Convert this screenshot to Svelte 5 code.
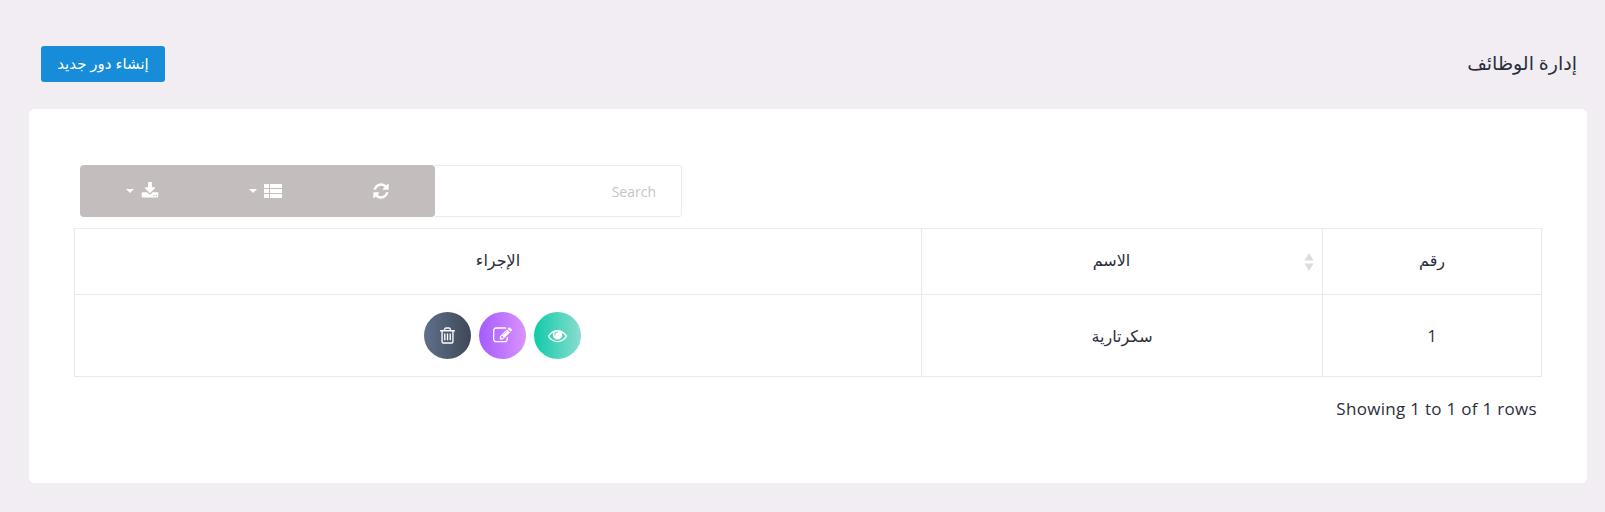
<script>
  const paths = {
    refresh: "M1639 1056q0 5-1 7-64 268-268 434.5t-478 166.5q-146 0-282.5-55t-243.5-157l-129 129q-19 19-45 19t-45-19-19-45v-448q0-26 19-45t45-19h448q26 0 45 19t19 45-19 45l-137 137q71 66 161 102t187 36q134 0 250-65t186-179q11-17 53-117 8-23 30-23h192q13 0 22.5 9.5t9.5 22.5zm25-800v448q0 26-19 45t-45 19h-448q-26 0-45-19t-19-45 19-45l138-138q-148-137-349-137-134 0-250 65t-186 179q-11 17-53 117-8 23-30 23h-199q-13 0-22.5-9.5t-9.5-22.5v-7q65-268 270-434.5t480-166.5q146 0 284 55.5t245 156.5l130-129q19-19 45-19t45 19 19 45z",
    list: "M0 2h5v4H0zM6 2h12v4H6zM0 7h5v4H0zM6 7h12v4H6zM0 12h5v4H0zM6 12h12v4H6z",
    download: "M1344 1344q0-26-19-45t-45-19-45 19-19 45 19 45 45 19 45-19 19-45zm256 0q0-26-19-45t-45-19-45 19-19 45 19 45 45 19 45-19 19-45zm128-224v320q0 40-28 68t-68 28h-1472q-40 0-68-28t-28-68v-320q0-40 28-68t68-28h465l135 136q58 56 136 56t136-56l136-136h464q40 0 68 28t28 68zm-325-569q17 41-14 70l-448 448q-18 19-45 19t-45-19l-448-448q-31-29-14-70 17-39 59-39h256v-448q0-26 19-45t45-19h256q26 0 45 19t19 45v448h256q42 0 59 39z",
    trash: "M704 736v576q0 14-9 23t-23 9h-64q-14 0-23-9t-9-23v-576q0-14 9-23t23-9h64q14 0 23 9t9 23zm256 0v576q0 14-9 23t-23 9h-64q-14 0-23-9t-9-23v-576q0-14 9-23t23-9h64q14 0 23 9t9 23zm256 0v576q0 14-9 23t-23 9h-64q-14 0-23-9t-9-23v-576q0-14 9-23t23-9h64q14 0 23 9t9 23zm128 724v-948h-896v948q0 22 7 40.5t14.5 27 10.5 8.5h832q3 0 10.5-8.5t14.5-27 7-40.5zm-672-1076h448l-48-117q-7-9-17-11h-317q-10 2-17 11zm928 32v64q0 14-9 23t-23 9h-96v948q0 83-47 143.5t-113 60.5h-832q-66 0-113-58.5t-47-141.5v-952h-96q-14 0-23-9t-9-23v-64q0-14 9-23t23-9h309l70-167q15-37 54-63t79-26h320q40 0 79 26t54 63l70 167h309q14 0 23 9t9 23z",
    edit: "M888 1184l116-116-152-152-116 116v56h96v96h56zm440-720q-16-16-33 1l-350 350q-17 17-1 33t33-1l350-350q17-17 1-33zm80 594v190q0 119-84.5 203.5t-203.5 84.5h-832q-119 0-203.5-84.5t-84.5-203.5v-832q0-119 84.5-203.5t203.5-84.5h832q63 0 117 25 15 7 18 23 3 17-9 29l-49 49q-14 14-32 8-23-6-45-6h-832q-66 0-113 47t-47 113v832q0 66 47 113t113 47h832q66 0 113-47t47-113v-126q0-13 9-22l64-64q15-15 35-7t20 29zm-96-738l288 288-672 672h-288v-288zm444 132l-92 92-288-288 92-92q28-28 68-28t68 28l152 152q28 28 28 68t-28 68z",
    eye: "M1664 960q-152-236-381-353 61 104 61 225 0 185-131.5 316.5t-316.5 131.5-316.5-131.5-131.5-316.5q0-121 61-225-229 117-381 353 133 205 333.5 326.5t434.5 121.5 434.5-121.5 333.5-326.5zm-720-384q0-20-14-34t-34-14q-125 0-214.5 89.5t-89.5 214.5q0 20 14 34t34 14 34-14 14-34q0-86 61-147t147-61q20 0 34-14t14-34zm848 384q0 34-20 69-140 230-376.5 368.5t-499.5 138.5-499.5-139-376.5-368q-20-35-20-69t20-69q140-229 376.5-368t499.5-139 499.5 139 376.5 368q20 35 20 69z"
  };
</script>

<div class="page" dir="rtl">
  <header class="head">
    <h1>إدارة الوظائف</h1>
    <button class="create">إنشاء دور جديد</button>
  </header>

  <section class="card">
    <div class="tools" dir="ltr">
      <div class="group">
        <button class="tool dl">
          <span class="caret"></span>
          <svg viewBox="0 0 1792 1792" class="ic"><path d={paths.download} /></svg>
        </button>
        <button class="tool cols">
          <span class="caret"></span>
          <svg viewBox="0 0 18 18" class="ic"><path d={paths.list} /></svg>
        </button>
        <button class="tool ref">
          <svg viewBox="0 0 1792 1792" class="ic"><path d={paths.refresh} /></svg>
        </button>
      </div>
      <input class="search" dir="rtl" placeholder="Search" />
    </div>

    <table>
      <colgroup>
        <col class="c1" />
        <col class="c2" />
        <col />
      </colgroup>
      <thead>
        <tr>
          <th>رقم</th>
          <th class="sortable">
            الاسم
            <svg class="sort" viewBox="0 0 10 18"><path d="M5 0l4.5 7.5h-9z" /><path d="M5 18l4.5-7.5h-9z" /></svg>
          </th>
          <th>الإجراء</th>
        </tr>
      </thead>
      <tbody>
        <tr>
          <td>1</td>
          <td>سكرتارية</td>
          <td>
            <div class="actions">
              <span class="act view"><svg viewBox="0 0 1792 1792"><path d={paths.eye} /></svg></span>
              <span class="act edit"><svg viewBox="0 0 1792 1792"><path d={paths.edit} /></svg></span>
              <span class="act del"><svg viewBox="0 0 1792 1792"><path d={paths.trash} /></svg></span>
            </div>
          </td>
        </tr>
      </tbody>
    </table>

    <p class="info">Showing 1 to 1 of 1 rows</p>
  </section>
</div>

<style>
  :global(body) {
    margin: 0;
    background: #f1edf3;
  }
  .page {
    font-family: "Open Sans", "DejaVu Sans", sans-serif;
    color: #2a2e3a;
    height: 512px;
    overflow: hidden;
    padding-top: 46px;
    box-sizing: border-box;
  }
  .head {
    display: flex;
    justify-content: space-between;
    align-items: center;
    height: 36px;
    padding: 0 28px 0 41px;
  }
  h1 {
    margin: 0 0 2px;
    font-size: 19px;
    font-weight: 400;
  }
  .create {
    width: 124px;
    height: 36px;
    background: #178cd9;
    color: #fff;
    border: 0;
    border-radius: 3px;
    font: inherit;
    font-size: 15px;
    padding: 0 0 2px;
  }
  .card {
    background: #fff;
    border-radius: 6px;
    margin: 27px 18px 0 29px;
    padding: 56px 45px 0;
    height: 374px;
    box-sizing: border-box;
  }
  .tools {
    display: flex;
    padding-left: 6px;
    margin-bottom: 11px;
    height: 52px;
  }
  .group {
    display: flex;
    width: 355px;
    background: #c3bdbd;
    border-radius: 4px;
  }
  .tool {
    flex: 1;
    background: none;
    border: 0;
    padding: 0;
    display: flex;
    align-items: center;
    justify-content: center;
    gap: 7px;
  }
  .tool.dl { padding-left: 9px; }
  .tool.cols { padding-left: 15px; }
  .tool.ref { padding-left: 8px; }
  .ic {
    width: 18px;
    height: 18px;
    fill: #fff;
  }
  .caret {
    width: 0;
    height: 0;
    border-left: 4px solid transparent;
    border-right: 4px solid transparent;
    border-top: 4px solid #fff;
  }
  .search {
    width: 247px;
    height: 52px;
    box-sizing: border-box;
    border: 1px solid #e9e9ef;
    border-left: 0;
    border-radius: 0 3px 3px 0;
    padding: 0 25px;
    font: inherit;
    font-size: 14px;
    outline: none;
    background: #fff;
  }
  .search::placeholder {
    color: #c8c4c4;
    opacity: 1;
  }
  table {
    width: 100%;
    border-collapse: collapse;
    table-layout: fixed;
    font-size: 16px;
  }
  .c1 { width: 219px; }
  .c2 { width: 401px; }
  th, td {
    border: 1px solid #e9e9ef;
    text-align: center;
    font-weight: 400;
    padding: 0;
    position: relative;
  }
  th { height: 66px; padding-bottom: 3px; box-sizing: border-box; }
  th.sortable { padding-right: 21px; }
  td { height: 81px; }
  .sort {
    position: absolute;
    right: 8px;
    top: 24px;
    width: 10px;
    height: 18px;
    fill: #dcdcdc;
  }
  .actions {
    display: flex;
    justify-content: center;
    gap: 8px;
    padding-left: 9px;
  }
  .act {
    width: 47px;
    height: 47px;
    border-radius: 50%;
    display: flex;
    align-items: center;
    justify-content: center;
  }
  .act svg {
    width: 19px;
    height: 19px;
    fill: #fff;
  }
  .view { background: linear-gradient(to right, #0fcba8, #8bdccf); }
  .edit { background: linear-gradient(to right, #a35cff, #db92ff); }
  .del { background: linear-gradient(to right, #5f708c, #3e4857); }
  .info {
    margin: 21px 5px 0 0;
    font-size: 17px;
    letter-spacing: 0.3px;
    line-height: 22px;
  }
</style>
